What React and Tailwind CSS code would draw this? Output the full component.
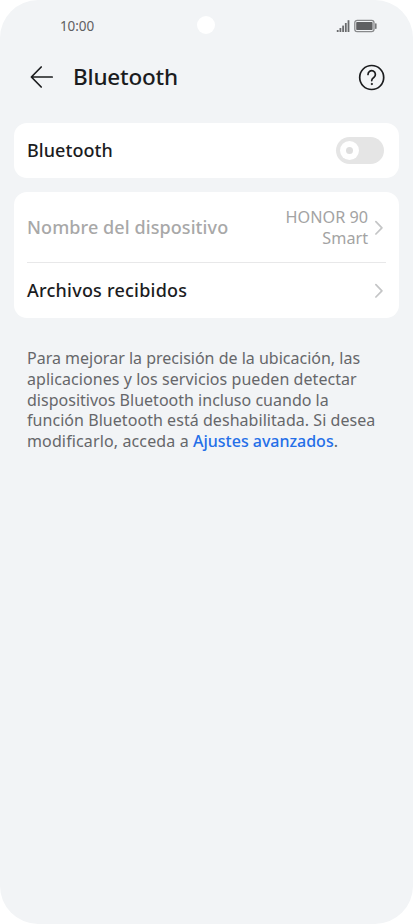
import React, { useState } from "react";

const Chevron = () => (
  <svg className="w-[9px] h-4 shrink-0" viewBox="0 0 9 16" fill="none" stroke="#c4c5c6" strokeWidth="1.7" strokeLinecap="round" strokeLinejoin="round">
    <path d="M0.9 1.6 6.9 7.8 0.9 14" />
  </svg>
);

const StatusBar = () => (
  <div className="h-[51px] pl-[60px] pr-[35px] grid grid-cols-3 items-center">
    <span className="text-[13.5px] leading-[18px] text-[#5f6062] tracking-[-0.1px]">10:00</span>
    <span className="w-[18px] h-[18px] rounded-full bg-white justify-self-center relative left-[-13px] top-[-1px]" />
    <div className="flex items-center justify-end gap-1">
      <svg width="14" height="14" viewBox="0 0 14 14" fill="#6a6b6d">
        <rect x="0.8" y="11" width="1.8" height="2" />
        <rect x="3.5" y="9" width="1.8" height="4" />
        <rect x="6.2" y="6.6" width="1.8" height="6.4" />
        <rect x="8.9" y="4" width="1.8" height="9" />
        <rect x="11.6" y="1.2" width="1.8" height="11.8" />
      </svg>
      <svg width="24" height="14" viewBox="0 0 24 14">
        <rect x="0.8" y="1.3" width="19.2" height="11.4" rx="2.4" fill="none" stroke="#88898b" strokeWidth="1.3" />
        <rect x="2.2" y="2.9" width="16.4" height="8.2" rx="0.8" fill="#5f6062" />
        <rect x="21" y="4.2" width="1.6" height="5.8" rx="0.7" fill="#77787a" />
      </svg>
    </div>
  </div>
);

const Header = () => (
  <header className="h-[52px] flex items-center pl-[30px] pr-7">
    <button aria-label="Atrás">
      <svg width="24" height="24" viewBox="0 0 24 24" fill="none" stroke="#1b1c1e" strokeWidth="1.7" strokeLinecap="round" strokeLinejoin="round">
        <path d="M22.2 12H1.5M11.2 2 1.4 12l9.8 10" />
      </svg>
    </button>
    <h1 className="ml-[19px] text-[22.5px] leading-7 font-medium text-[#1b1c1e] tracking-[-0.2px]">Bluetooth</h1>
    <button aria-label="Ayuda" className="ml-auto">
      <svg width="27" height="27" viewBox="0 0 27 27" fill="none" stroke="#1b1c1e" strokeWidth="1.7" strokeLinecap="round" strokeLinejoin="round">
        <circle cx="13.7" cy="13.5" r="12" />
        <path d="M10 10.4a3.7 3.7 0 1 1 6 2.9c-1.5 1-2.3 1.6-2.3 3.3" />
        <circle cx="13.7" cy="20" r="0.6" fill="#1b1c1e" strokeWidth="1" />
      </svg>
    </button>
  </header>
);

export default function App() {
  const [on, setOn] = useState(false);

  return (
    <div className="w-full h-[924px] bg-white">
      <div className="h-full rounded-[38px] bg-[#f2f4f6] font-['Noto_Sans',sans-serif]">
        <StatusBar />
        <Header />

        <main className="px-3.5 pt-5">
          <section className="h-[55px] rounded-[13px] bg-white flex items-center justify-between pl-[13px] pr-[15px]">
            <span className="text-[18px] font-medium text-[#1b1c1e] tracking-[0.05px]">Bluetooth</span>
            <button
              role="switch"
              aria-checked={on}
              aria-label="Bluetooth"
              onClick={() => setOn(!on)}
              className={`w-12 h-[27px] rounded-full flex items-center px-1 ${on ? "bg-[#256fe8] justify-end" : "bg-[#e5e5e5]"}`}
            >
              <span className="w-[19px] h-[19px] rounded-full bg-white flex items-center justify-center">
                <span className="w-[7px] h-[7px] rounded-full bg-[#dedede]" />
              </span>
            </button>
          </section>

          <section className="mt-3.5 h-[126px] rounded-[13px] bg-white px-[13px]">
            <div className="h-[71px] pt-px flex items-center border-b border-[#e8e8e9]">
              <span className="text-[18px] font-medium text-[#a8a8a8] tracking-[0.09px] whitespace-nowrap">Nombre del dispositivo</span>
              <span className="ml-auto mr-[7px] pt-px text-right text-[16.2px] leading-[21px] text-[#a3a3a3]">
                HONOR 90
                <br />
                Smart
              </span>
              <Chevron />
              <span className="w-0.5" />
            </div>
            <div className="h-[55px] flex items-center justify-between pr-0.5">
              <span className="text-[18px] font-medium text-[#1b1c1e] tracking-[0.23px]">Archivos recibidos</span>
              <Chevron />
            </div>
          </section>

          <p className="mt-[30px] pl-[13px] text-[16px] leading-[20.8px] text-[#66676a] whitespace-nowrap">
            <span>Para mejorar la precisión de la ubicación, las</span>
            <br />
            <span className="tracking-[0.06px]">aplicaciones y los servicios pueden detectar</span>
            <br />
            <span className="tracking-[0.01px]">dispositivos Bluetooth incluso cuando la</span>
            <br />
            <span className="tracking-[0.05px]">función Bluetooth está deshabilitada. Si desea</span>
            <br />
            <span className="tracking-[0.13px]">modificarlo, acceda a </span>
            <a className="font-medium text-[#256fe8] tracking-[-0.02px]">Ajustes avanzados</a>.
          </p>
        </main>
      </div>
    </div>
  );
}
